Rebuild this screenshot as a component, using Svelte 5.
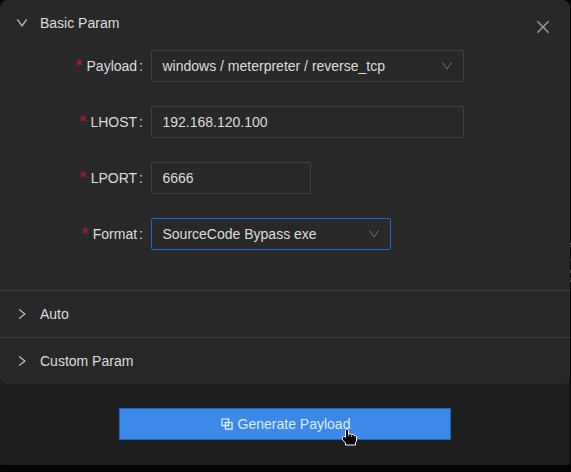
<script>
  const down =
    'M884 256h-75c-5.1 0-9.9 2.5-12.9 6.6L512 654.2 227.9 262.6c-3-4.1-7.8-6.6-12.9-6.6h-75c-6.5 0-10.3 7.4-6.5 12.7l352.6 486.1c12.8 17.6 39 17.6 51.7 0l352.6-486.1c3.9-5.3.1-12.7-6.4-12.7z';
  const right =
    'M765.7 486.8L314.9 134.7A7.97 7.97 0 00302 141v77.3c0 4.9 2.3 9.6 6.1 12.6l360 281.1-360 281.1c-3.9 3-6.1 7.7-6.1 12.6V883c0 6.7 7.7 10.4 12.9 6.3l450.8-352.1a31.96 31.96 0 000-50.4z';
  const close =
    'M799.9 166.3l57.8 57.8L569.9 512l287.8 287.9-57.8 57.8L512 569.9 224.1 857.7l-57.8-57.8L454.1 512 166.3 224.1l57.8-57.8L512 454.1z';
  const block =
    'M856 376H648V168c0-8.8-7.2-16-16-16H168c-8.8 0-16 7.2-16 16v464c0 8.8 7.2 16 16 16h208v208c0 8.8 7.2 16 16 16h464c8.8 0 16-7.2 16-16V392c0-8.8-7.2-16-16-16zm-480 16v188H220V220h360v156H392c-8.8 0-16 7.2-16 16zm204 52v136H444V444h136zm224 360H444V648h188c8.8 0 16-7.2 16-16V444h156v360z';

  const fields = [
    { label: 'Payload', value: 'windows / meterpreter / reverse_tcp', select: true, size: 'wide' },
    { label: 'LHOST', value: '192.168.120.100', size: 'wide' },
    { label: 'LPORT', value: '6666', size: 'narrow' },
    { label: 'Format', value: 'SourceCode Bypass exe', select: true, size: 'medium', focused: true }
  ];
</script>

{#snippet icon(path, size)}
  <svg viewBox="64 64 896 896" width={size} height={size} fill="currentColor" aria-hidden="true">
    <path d={path} />
  </svg>
{/snippet}

<div class="screen">
  <div class="modal">
    <button class="close" aria-label="Close">{@render icon(close, 16)}</button>
    <div class="collapse">
      <section>
        <div class="header open">{@render icon(down, 12)}<span>Basic Param</span></div>
        <div class="form">
          {#each fields as f}
            <div class="row">
              <div class="label"><i>*</i><span>{f.label}</span><b>:</b></div>
              <div class="control {f.size}" class:focused={f.focused}>
                <span>{f.value}</span>
                {#if f.select}<em>{@render icon(down, 12)}</em>{/if}
              </div>
            </div>
          {/each}
        </div>
      </section>
      <section>
        <div class="header">{@render icon(right, 12)}<span>Auto</span></div>
      </section>
      <section>
        <div class="header">{@render icon(right, 12)}<span>Custom Param</span></div>
      </section>
    </div>
    <div class="footer">
      <button class="primary">{@render icon(block, 14)}<span>Generate Payload</span></button>
    </div>
    <svg class="cursor" width="16" height="17" viewBox="0 0 16 17" aria-hidden="true">
      <path
        fill="#000"
        stroke="#fff"
        d="M3.5 1.5l1-1h1l1 1v3.5h2l1 .5h2l1 1h1l1 1v4.5l-1 1.5v2.5H3.5v-2L.5 10.5V8.5l1-1h1l1 1z"
      />
      <path fill="none" stroke="#fff" stroke-opacity=".5" d="M6.5 5v3M9.5 5.5v2.5M12 6.5v2" />
    </svg>
  </div>
  <!-- Page content behind the dialog, showing at its right edge -->
  <svg class="behind" width="1" height="60" viewBox="0 0 1 60" aria-hidden="true">
    <path fill="#4a4a4a" d="M0 11h1v2H0zM0 14h1v1H0zM0 38h1v3H0zM0 46h1v1H0zM0 48h1v2H0z" />
    <path fill="#222" d="M0 27h1v2H0z" />
  </svg>
</div>

<style>
  :global(body) {
    margin: 0;
    background: #050505;
  }
  .screen {
    position: relative;
    width: 571px;
    height: 472px;
    overflow: hidden;
    background: #050505;
    font: 14px/22px 'Liberation Sans', Arial, sans-serif;
    color: rgba(255, 255, 255, 0.85);
  }
  .modal {
    position: relative;
    width: 570px;
    height: 465px;
    background: #1f1f1f;
    border-radius: 8px 8px 2px 2px;
  }
  svg {
    display: block;
    flex: none;
  }
  .close {
    position: absolute;
    top: 19px;
    right: 19px;
    padding: 0;
    border: 0;
    background: none;
    color: rgba(255, 255, 255, 0.55);
  }
  .collapse {
    background: #282828;
    border-radius: 8px;
    overflow: hidden;
  }
  section + section {
    border-top: 1px solid #434343;
  }
  .header {
    display: flex;
    align-items: center;
    gap: 12px;
    padding: 12px 16px;
  }
  .open svg {
    color: rgba(255, 255, 255, 0.72);
    stroke: currentColor;
    stroke-width: 20;
  }
  .form {
    display: flex;
    flex-direction: column;
    gap: 24px;
    padding: 4px 0 40px;
  }
  .row {
    display: flex;
    height: 32px;
  }
  .label {
    display: flex;
    justify-content: flex-end;
    align-items: center;
    width: 151px;
  }
  .label i {
    margin-right: 4px;
    color: #b81d25;
    font: 15px/14px 'DejaVu Sans', sans-serif;
  }
  .label b {
    margin: 0 8px 0 2px;
    font-weight: 400;
  }
  .control {
    box-sizing: border-box;
    display: flex;
    align-items: center;
    justify-content: space-between;
    padding: 0 10.5px;
    border: 1px solid #434343;
    border-radius: 2px;
  }
  .wide {
    width: 313px;
  }
  .medium {
    width: 240px;
  }
  .narrow {
    width: 160px;
  }
  .focused {
    border-color: #1668dc;
  }
  .control em {
    color: rgba(255, 255, 255, 0.3);
  }
  .footer {
    display: flex;
    justify-content: center;
    padding-top: 24px;
  }
  .primary {
    box-sizing: border-box;
    display: flex;
    align-items: center;
    justify-content: center;
    gap: 4px;
    width: 332px;
    height: 32px;
    padding: 0;
    border: 1px solid #1765ba;
    background: #3c89e8;
    color: rgba(255, 255, 255, 0.85);
    font: inherit;
  }
  .primary svg {
    stroke: currentColor;
    stroke-width: 14;
  }
  .cursor {
    position: absolute;
    left: 342px;
    top: 429px;
  }
  .behind {
    position: absolute;
    right: 0;
    top: 232px;
  }
</style>
